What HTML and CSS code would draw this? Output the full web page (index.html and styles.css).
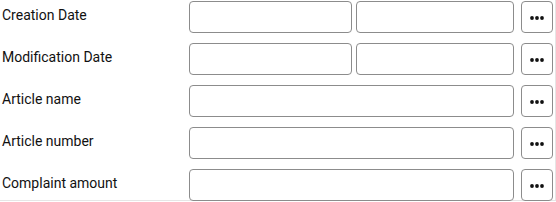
FILE: index.html
```html
<!DOCTYPE html>
<html>
<head>
<meta charset="utf-8">
<link rel="stylesheet" href="styles.css">
</head>
<body>
<div class="form">
  <div class="row">
    <label class="label">Creation Date</label>
    <div class="fields two"><input class="input" type="text"><input class="input" type="text"></div>
    <button class="more" type="button"><svg class="dots" width="14" height="4" viewBox="0 0 14 4"><circle cx="2" cy="2" r="1.9"/><circle cx="7" cy="2" r="1.9"/><circle cx="12" cy="2" r="1.9"/></svg></button>
  </div>
  <div class="row">
    <label class="label">Modification Date</label>
    <div class="fields two"><input class="input" type="text"><input class="input" type="text"></div>
    <button class="more" type="button"><svg class="dots" width="14" height="4" viewBox="0 0 14 4"><circle cx="2" cy="2" r="1.9"/><circle cx="7" cy="2" r="1.9"/><circle cx="12" cy="2" r="1.9"/></svg></button>
  </div>
  <div class="row">
    <label class="label">Article name</label>
    <div class="fields"><input class="input" type="text"></div>
    <button class="more" type="button"><svg class="dots" width="14" height="4" viewBox="0 0 14 4"><circle cx="2" cy="2" r="1.9"/><circle cx="7" cy="2" r="1.9"/><circle cx="12" cy="2" r="1.9"/></svg></button>
  </div>
  <div class="row">
    <label class="label">Article number</label>
    <div class="fields"><input class="input" type="text"></div>
    <button class="more" type="button"><svg class="dots" width="14" height="4" viewBox="0 0 14 4"><circle cx="2" cy="2" r="1.9"/><circle cx="7" cy="2" r="1.9"/><circle cx="12" cy="2" r="1.9"/></svg></button>
  </div>
  <div class="row">
    <label class="label">Complaint amount</label>
    <div class="fields"><input class="input" type="text"></div>
    <button class="more" type="button"><svg class="dots" width="14" height="4" viewBox="0 0 14 4"><circle cx="2" cy="2" r="1.9"/><circle cx="7" cy="2" r="1.9"/><circle cx="12" cy="2" r="1.9"/></svg></button>
  </div>
</div>
</body>
</html>
```
FILE: styles.css
```css
html, body {
  margin: 0;
  padding: 0;
  background: #ffffff;
}
body {
  font-family: Roboto, "Liberation Sans", sans-serif;
  font-size: 14px;
  color: #111111;
}
.form {
  width: 556px;
  height: 201px;
  box-sizing: border-box;
  border-right: 1px solid #e6e6e6;
  border-bottom: 1px solid #e6e6e6;
  padding-top: 1px;
  display: flex;
  flex-direction: column;
  gap: 10px;
}
.row {
  display: grid;
  grid-template-columns: 182px 325px 32px;
  column-gap: 7px;
  height: 32px;
  align-items: center;
}
.label {
  padding-left: 2px;
  align-self: start;
  line-height: 28px;
}
.fields {
  display: grid;
  grid-template-columns: 1fr;
  height: 32px;
}
.fields.two {
  grid-template-columns: 163px 158px;
  column-gap: 4px;
}
.input {
  margin: 0;
  height: 32px;
  box-sizing: border-box;
  border: 1px solid #8c8c8c;
  border-radius: 4px;
  background: #ffffff;
  padding: 0 6px;
  font: inherit;
  width: 100%;
}
.more {
  margin: 0;
  height: 32px;
  width: 32px;
  box-sizing: border-box;
  border: 1px solid #8c8c8c;
  border-radius: 4px;
  background: #ffffff;
  padding: 0;
  display: flex;
  align-items: center;
  justify-content: center;
}
.dots {
  display: block;
  fill: #111111;
  margin-top: 1px;
}
```
